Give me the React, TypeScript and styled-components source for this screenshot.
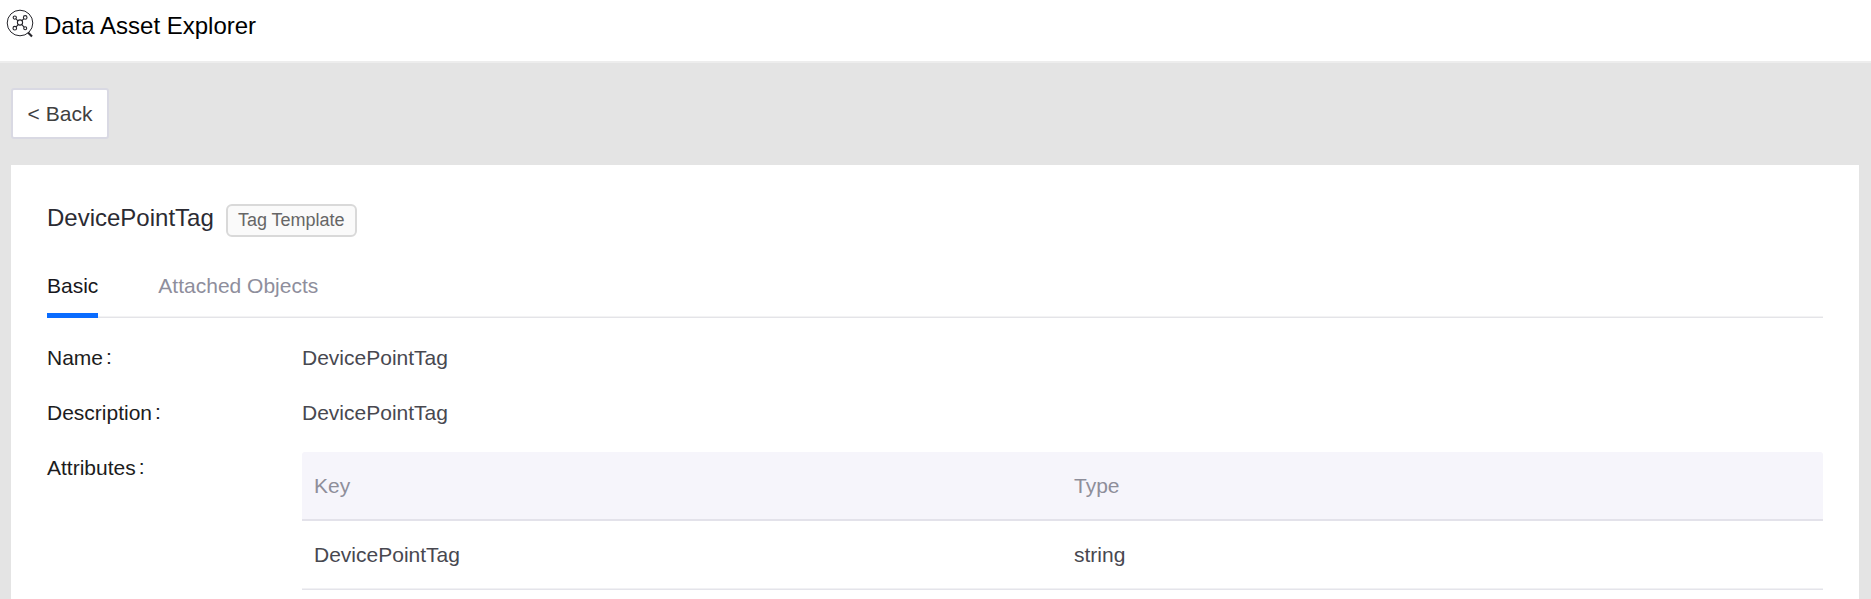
import React from "react";
import styled, { createGlobalStyle } from "styled-components";

const GlobalStyle = createGlobalStyle`
  * { box-sizing: border-box; }
  body {
    margin: 0;
    background: #e4e4e4;
    font-family: "Liberation Sans", Arial, sans-serif;
    font-size: 21px;
    line-height: 32px;
    color: #484850;
  }
`;

const Page = styled.div`
  height: 599px;
  display: flex;
  flex-direction: column;
  overflow: hidden;
`;

const Header = styled.header`
  flex: none;
  display: flex;
  align-items: flex-start;
  gap: 9px;
  height: 63px;
  padding: 9px 6px 0;
  background: #fff;
  border-bottom: 2px solid #ededed;
`;

const AppTitle = styled.h1`
  margin: 0;
  font-size: 24px;
  font-weight: 400;
  line-height: 34px;
  color: #000;
`;

const Toolbar = styled.div`
  flex: none;
  height: 102px;
  padding: 25px 11px 0;
`;

const BackButton = styled.button`
  display: block;
  width: 98px;
  height: 51px;
  padding: 0;
  border: 2px solid #d9d9e3;
  border-radius: 3px;
  background: #fff;
  font: inherit;
  color: #404040;
`;

const Card = styled.main`
  flex: 1;
  margin: 0 12px 0 11px;
  padding: 35px 36px 0;
  background: #fff;
`;

const TitleRow = styled.div`
  display: flex;
  gap: 12px;
  height: 64px;
`;

const Title = styled.h2`
  margin: 0;
  font-size: 24px;
  font-weight: 400;
  line-height: 36px;
  color: #2b2b33;
`;

const Tag = styled.span`
  width: 131px;
  height: 33px;
  margin-top: 4px;
  border: 2px solid #d9d9d9;
  border-radius: 6px;
  background: #fafafa;
  font-size: 18px;
  line-height: 29px;
  text-align: center;
  color: #666;
`;

const Tabs = styled.nav`
  display: flex;
  gap: 60px;
  height: 54px;
  box-shadow: inset 0 -1px #e4e4e8, inset 0 -2px #f3f3f4;
`;

const Tab = styled.span<{ $active?: boolean }>`
  padding-top: 6px;
  color: ${(p) => (p.$active ? "#17171c" : "#8e8e9c")};
  border-bottom: 5px solid ${(p) => (p.$active ? "#0a6cff" : "transparent")};
`;

const Details = styled.dl`
  display: grid;
  grid-template-columns: 255px 1fr;
  row-gap: 23px;
  margin: 24px 0 0;
`;

const Label = styled.dt`
  color: #1c1c20;
  &::after {
    content: ":";
    margin-left: 3px;
    position: relative;
    top: -1px;
  }
`;

const Value = styled.dd`
  margin: 0;
`;

const Row = styled.div<{ $head?: boolean }>`
  display: grid;
  grid-template-columns: 760px 1fr;
  height: 69px;
  padding-top: 18px;
  background: ${(p) => (p.$head ? "#f6f5fb" : "#fff")};
  color: ${(p) => (p.$head ? "#8e8e9a" : "inherit")};
  box-shadow: ${(p) =>
    p.$head
      ? "inset 0 -2px #e3e2ea"
      : "inset 0 -1px #e4e4ea, inset 0 -2px #f1f1f4"};
  border-radius: ${(p) => (p.$head ? "3px 3px 0 0" : "0")};
`;

const Cell = styled.span`
  padding-left: 12px;
`;

const ExplorerIcon = () => (
  <svg width="29" height="29" viewBox="0 0 29 29" fill="none" stroke="#25252b">
    <circle cx="14" cy="14" r="12.8" strokeWidth="1" />
    <path d="M22 23.5l4 4" strokeWidth="2.2" />
    <g strokeWidth="1.1">
      <circle cx="14" cy="13.5" r="2.6" />
      <circle cx="8.8" cy="8.6" r="1.6" />
      <circle cx="19.2" cy="8.4" r="1.8" />
      <circle cx="8.8" cy="19.2" r="1.8" />
      <circle cx="19.2" cy="19.2" r="1.5" />
      <path d="M9.9 9.8l2.2 2M17.9 9.7l-2 2M10.1 17.9l2.1-2.3M18.1 18.1l-2.2-2.4" />
    </g>
  </svg>
);

export default function App() {
  return (
    <>
      <GlobalStyle />
      <Page>
        <Header>
          <ExplorerIcon />
          <AppTitle>Data Asset Explorer</AppTitle>
        </Header>
        <Toolbar>
          <BackButton>&lt; Back</BackButton>
        </Toolbar>
        <Card>
          <TitleRow>
            <Title>DevicePointTag</Title>
            <Tag>Tag Template</Tag>
          </TitleRow>
          <Tabs>
            <Tab $active>Basic</Tab>
            <Tab>Attached Objects</Tab>
          </Tabs>
          <Details>
            <Label>Name</Label>
            <Value>DevicePointTag</Value>
            <Label>Description</Label>
            <Value>DevicePointTag</Value>
            <Label>Attributes</Label>
            <Value>
              <Row $head>
                <Cell>Key</Cell>
                <Cell>Type</Cell>
              </Row>
              <Row>
                <Cell>DevicePointTag</Cell>
                <Cell>string</Cell>
              </Row>
            </Value>
          </Details>
        </Card>
      </Page>
    </>
  );
}
